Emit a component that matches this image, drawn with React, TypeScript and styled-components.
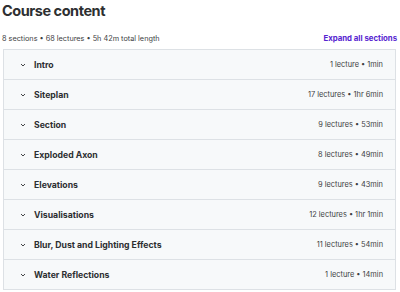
import styled, { createGlobalStyle } from "styled-components"

const GlobalStyle = createGlobalStyle`
  body {
    margin: 0;
    background: #fff;
    font-family: "Inter", "Roboto", sans-serif;
    color: #2d2f31;
  }
`

interface Section {
  title: string
  meta: string
}

const sections: Section[] = [
  { title: "Intro", meta: "1 lecture • 1min" },
  { title: "Siteplan", meta: "17 lectures • 1hr 6min" },
  { title: "Section", meta: "9 lectures • 53min" },
  { title: "Exploded Axon", meta: "8 lectures • 49min" },
  { title: "Elevations", meta: "9 lectures • 43min" },
  { title: "Visualisations", meta: "12 lectures • 1hr 1min" },
  { title: "Blur, Dust and Lighting Effects", meta: "11 lectures • 54min" },
  { title: "Water Reflections", meta: "1 lecture • 14min" },
]

const Page = styled.div`
  width: 400px;
  height: 292px;
  padding: 0 4px 0 3px;
  box-sizing: border-box;
  overflow: hidden;
`

const Title = styled.h2`
  margin: 0 0 0 -1px;
  padding: 2px 0 0 0;
  font-size: 14.5px;
  font-weight: 700;
  line-height: 18px;
  letter-spacing: -0.45px;
`

const Summary = styled.div`
  display: flex;
  justify-content: space-between;
  align-items: center;
  margin-top: 11px;
  height: 14px;
`

const Stats = styled.span`
  font-size: 7.3px;
  color: #3e4143;
  margin-left: -1px;
`

const ExpandLink = styled.button`
  border: none;
  background: none;
  padding: 0;
  font-family: inherit;
  font-size: 7.8px;
  font-weight: 700;
  color: #5624d0;
  margin-right: -1px;
  cursor: pointer;
`

const List = styled.div`
  margin-top: 4px;
  border: 1px solid #dde1e5;
  background: #f7f9fa;
`

const Row = styled.div`
  display: flex;
  align-items: center;
  height: 30px;
  box-sizing: border-box;
  padding: 0 12px 0 16px;
  border-top: 1px solid #dde1e5;

  &:first-child {
    border-top: none;
    height: 29px;
  }
`

const Chevron = styled.svg`
  width: 6px;
  height: 6px;
  margin-right: 8px;
  flex-shrink: 0;
`

const RowTitle = styled.span`
  flex: 1;
  font-size: 8.7px;
  font-weight: 700;
  color: #2d2f31;
`

const RowMeta = styled.span`
  font-size: 7.4px;
  color: #3e4143;
`

export default function App() {
  return (
    <>
      <GlobalStyle />
      <Page>
        <Title>Course content</Title>
        <Summary>
          <Stats>8 sections • 68 lectures • 5h 42m total length</Stats>
          <ExpandLink>Expand all sections</ExpandLink>
        </Summary>
        <List>
          {sections.map((s) => (
            <Row key={s.title}>
              <Chevron viewBox="0 0 6 6">
                <path d="M1 2 L3 4 L5 2" fill="none" stroke="#2d2f31" strokeWidth="0.9" />
              </Chevron>
              <RowTitle>{s.title}</RowTitle>
              <RowMeta>{s.meta}</RowMeta>
            </Row>
          ))}
        </List>
      </Page>
    </>
  )
}
